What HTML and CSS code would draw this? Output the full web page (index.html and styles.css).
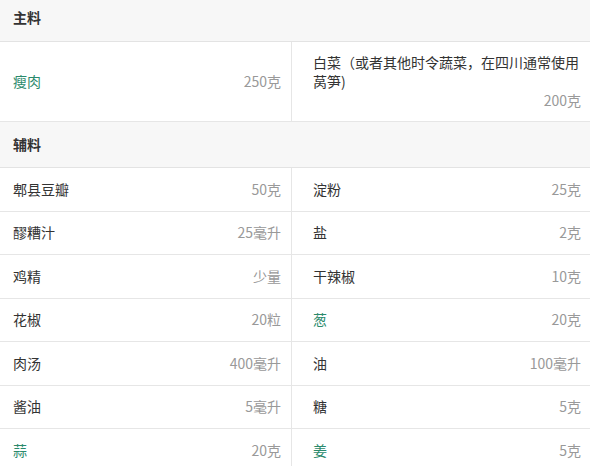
FILE: index.html
```html
<!DOCTYPE html>
<html lang="zh">
<head>
<meta charset="utf-8">
<link rel="stylesheet" href="styles.css">
</head>
<body>
<div class="section-title first">主料</div>
<div class="grid">
  <div class="cell left main"><span class="name link">瘦肉</span><span class="qty">250克</span></div>
  <div class="cell right main wrap"><span class="name">白菜（或者其他时令蔬菜，在四川通常使用莴笋)</span><span class="qty">200克</span></div>
</div>
<div class="section-title second">辅料</div>
<div class="grid">
  <div class="cell left"><span class="name">郫县豆瓣</span><span class="qty">50克</span></div>
  <div class="cell right"><span class="name">淀粉</span><span class="qty">25克</span></div>
  <div class="cell left"><span class="name">醪糟汁</span><span class="qty">25毫升</span></div>
  <div class="cell right"><span class="name">盐</span><span class="qty">2克</span></div>
  <div class="cell left"><span class="name">鸡精</span><span class="qty">少量</span></div>
  <div class="cell right"><span class="name">干辣椒</span><span class="qty">10克</span></div>
  <div class="cell left"><span class="name">花椒</span><span class="qty">20粒</span></div>
  <div class="cell right"><span class="name link">葱</span><span class="qty">20克</span></div>
  <div class="cell left"><span class="name">肉汤</span><span class="qty">400毫升</span></div>
  <div class="cell right"><span class="name">油</span><span class="qty">100毫升</span></div>
  <div class="cell left"><span class="name">酱油</span><span class="qty">5毫升</span></div>
  <div class="cell right"><span class="name">糖</span><span class="qty">5克</span></div>
  <div class="cell left"><span class="name link">蒜</span><span class="qty">20克</span></div>
  <div class="cell right"><span class="name link">姜</span><span class="qty">5克</span></div>
</div>
</body>
</html>
```

FILE: styles.css
```css
html, body {
  margin: 0;
  padding: 0;
  background: #ffffff;
}
body {
  font-family: "Noto Sans CJK SC", "Noto Sans", sans-serif;
  font-size: 14px;
  color: #333333;
  line-height: 19px;
}
.section-title {
  background: #f7f7f7;
  border-bottom: 1px solid #e3e3e3;
  font-weight: bold;
  color: #333333;
  padding-left: 13px;
  display: flex;
  align-items: center;
  box-sizing: border-box;
}
.section-title.first {
  height: 42px;
  padding-bottom: 6px;
}
.section-title.second {
  height: 46px;
}
.grid {
  display: grid;
  grid-template-columns: 292px 1fr;
}
.cell {
  display: flex;
  align-items: center;
  justify-content: space-between;
  border-bottom: 1px solid #e6e6e6;
  box-sizing: border-box;
  height: 43.5px;
  padding-right: 9px;
}
.cell.main {
  height: 80px;
}
.cell.left {
  border-right: 1px solid #e6e6e6;
  padding-left: 13px;
  padding-right: 10px;
}
.cell.right {
  padding-left: 21px;
}
.cell.wrap {
  flex-wrap: wrap;
  align-content: center;
}
.cell.wrap .name {
  flex: 1 1 100%;
}
.cell.wrap .qty {
  margin-left: auto;
}
.name.link {
  color: #2b8a6c;
}
.qty {
  color: #999999;
  white-space: nowrap;
}
```
